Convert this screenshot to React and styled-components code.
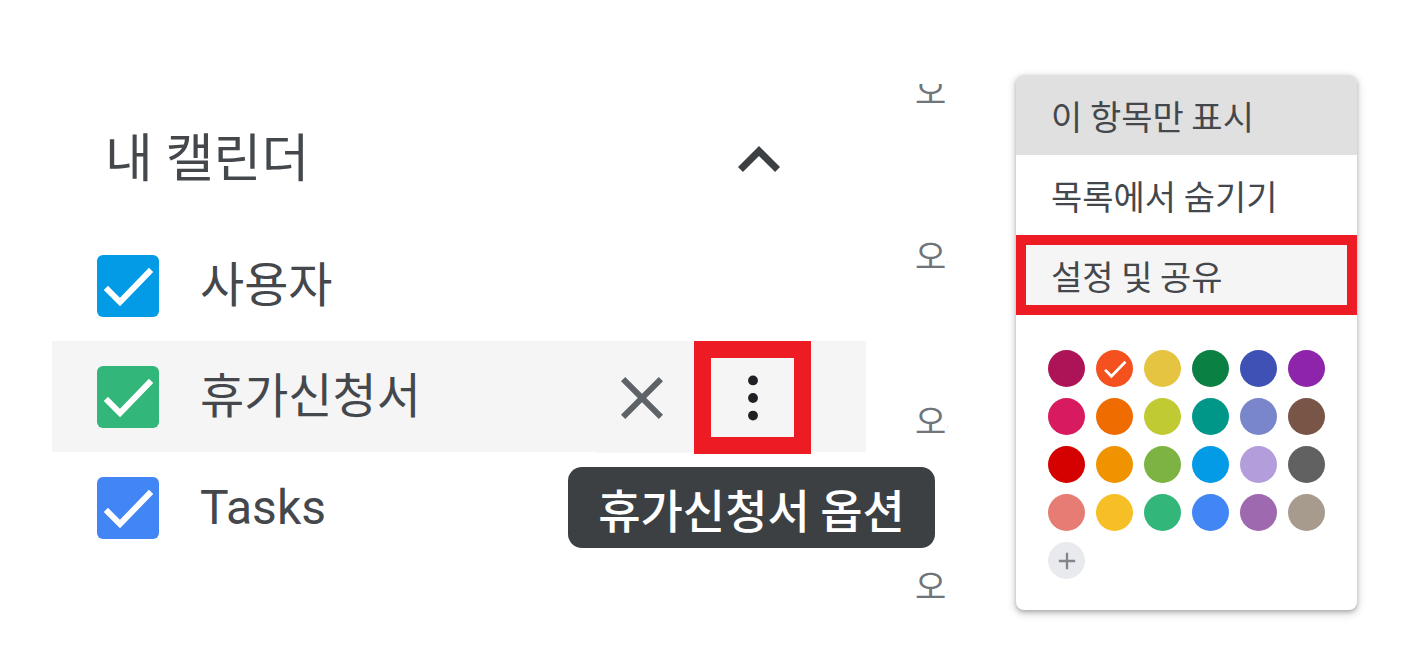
import React from 'react';
import styled, { createGlobalStyle } from 'styled-components';

const GlobalStyle = createGlobalStyle`
  html, body {
    margin: 0;
    padding: 0;
    background: #ffffff;
  }
  body {
    font-family: Roboto, 'Noto Sans CJK KR', sans-serif;
    color: #3c4043;
  }
`;

const Page = styled.div`
  position: relative;
  width: 1413px;
  height: 660px;
  display: flex;
  overflow: hidden;
`;

const Sidebar = styled.div`
  width: 814px;
  padding: 105px 0 0 52px;
  display: flex;
  flex-direction: column;
`;

const SectionHeader = styled.div`
  height: 110px;
  margin-bottom: 15px;
  padding: 0 65px 0 53px;
  display: flex;
  align-items: center;
  justify-content: space-between;

  h2 {
    margin: 0;
    font-family: Roboto, 'Noto Sans CJK KR', sans-serif;
    font-size: 52px;
    font-weight: 400;
    color: #44484c;
    line-height: 1;
  }
`;

const CalendarRow = styled.div`
  height: 111px;
  padding-left: 45px;
  display: flex;
  align-items: center;
  background: ${(p) => (p.$hover ? '#f5f5f5' : 'transparent')};
`;

const Checkbox = styled.div`
  width: 62px;
  height: 62px;
  border-radius: 6px;
  background: ${(p) => p.$color};
  flex-shrink: 0;

  svg {
    display: block;
  }
`;

const Label = styled.span`
  margin-left: 41px;
  font-size: 48px;
  line-height: 1;
  color: #44484c;
  white-space: nowrap;
`;

const Actions = styled.div`
  margin-left: auto;
  margin-right: 55px;
  display: flex;
  align-items: center;
  gap: 7px;
  align-self: flex-start;
`;

const IconButton = styled.div`
  width: ${(p) => (p.$marked ? '83px' : '90px')};
  height: ${(p) => (p.$marked ? '79px' : '111px')};
  display: flex;
  align-items: center;
  justify-content: center;
  border: ${(p) => (p.$marked ? '17px solid #ed1c24' : 'none')};
  background: #f5f5f5;
`;

const TimeColumn = styled.div`
  margin: 84px 0 0 49px;
  width: 33px;
  height: 516px;
  overflow: hidden;
`;

const TimeList = styled.div`
  margin-top: -77px;
  display: flex;
  flex-direction: column;
`;

const TimeLabel = styled.div`
  height: 165px;
  line-height: 165px;
  font-family: 'Noto Sans CJK KR', sans-serif;
  font-size: 34px;
  color: #70757a;
  white-space: nowrap;
`;

const Tooltip = styled.div`
  position: absolute;
  left: 568px;
  top: 467px;
  width: 367px;
  height: 81px;
  border-radius: 14px;
  background: #3c4043;
  color: #ffffff;
  display: flex;
  align-items: center;
  justify-content: center;
  font-family: 'Noto Sans CJK KR', sans-serif;
  font-size: 46px;
  font-weight: 500;
  white-space: nowrap;
`;

const Menu = styled.div`
  position: absolute;
  left: 1016px;
  top: 75px;
  width: 341px;
  height: 535px;
  border-radius: 8px;
  background: #ffffff;
  box-shadow: 0 2px 4px rgba(0, 0, 0, 0.25), 0 3px 8px 2px rgba(0, 0, 0, 0.12);
  overflow: hidden;
  display: flex;
  flex-direction: column;
`;

const MenuItem = styled.div`
  height: 80px;
  padding-left: 35px;
  display: flex;
  align-items: center;
  font-family: 'Noto Sans CJK KR', sans-serif;
  font-size: 34px;
  color: #44484c;
  background: ${(p) => (p.$active ? '#e0e0e0' : p.$marked ? '#f5f5f5' : '#ffffff')};
  box-shadow: ${(p) => (p.$marked ? 'inset 0 0 0 10px #ed1c24' : 'none')};
  white-space: nowrap;
`;

const Swatches = styled.div`
  padding: 35px 0 0 32px;
  display: grid;
  grid-template-columns: repeat(6, 37px);
  grid-auto-rows: 37px;
  gap: 11px;
`;

const Swatch = styled.div`
  width: 37px;
  height: 37px;
  border-radius: 50%;
  background: ${(p) => p.$color};
  display: flex;
  align-items: center;
  justify-content: center;
`;

const Check = ({ size = 62 }) => (
  <svg width={size} height={size} viewBox="0 0 62 62">
    <polyline points="11,35 23,47 52,17" fill="none" stroke="#ffffff" strokeWidth="6" strokeLinecap="square" />
  </svg>
);

const palette = [
  '#ad1457', '#f4511e', '#e4c441', '#0b8043', '#3f51b5', '#8e24aa',
  '#d81b60', '#ef6c00', '#c0ca33', '#009688', '#7986cb', '#795548',
  '#d50000', '#f09300', '#7cb342', '#039be5', '#b39ddb', '#616161',
  '#e67c73', '#f6bf26', '#33b679', '#4285f4', '#9e69af', '#a79b8e',
];

const calendars = [
  { name: '사용자', color: '#039be5' },
  { name: '휴가신청서', color: '#33b679', hover: true },
  { name: 'Tasks', color: '#4285f4' },
];

const times = ['오전 11시', '오후 12시', '오후 1시', '오후 2시'];

export default function App() {
  return (
    <Page>
      <GlobalStyle />
      <Sidebar>
        <SectionHeader>
          <h2>내 캘린더</h2>
          <svg width="84" height="84" viewBox="0 0 24 24" fill="#3c4043">
            <path d="M7.41 15.41L12 10.83l4.59 4.58L18 14l-6-6-6 6z" />
          </svg>
        </SectionHeader>
        {calendars.map((cal) => (
          <CalendarRow key={cal.name} $hover={cal.hover}>
            <Checkbox $color={cal.color}>
              <Check />
            </Checkbox>
            <Label>{cal.name}</Label>
            {cal.hover && (
              <Actions>
                <IconButton>
                  <svg width="72" height="72" viewBox="0 0 24 24" fill="#5f6368">
                    <path d="M19 6.41L17.59 5 12 10.59 6.41 5 5 6.41 10.59 12 5 17.59 6.41 19 12 13.41 17.59 19 19 17.59 13.41 12z" />
                  </svg>
                </IconButton>
                <IconButton $marked>
                  <svg width="62" height="62" viewBox="0 0 24 24" fill="#202124">
                    <circle cx="12" cy="5.2" r="1.9" />
                    <circle cx="12" cy="12" r="1.9" />
                    <circle cx="12" cy="18.8" r="1.9" />
                  </svg>
                </IconButton>
              </Actions>
            )}
          </CalendarRow>
        ))}
      </Sidebar>

      <TimeColumn>
        <TimeList>
          {times.map((t) => (
            <TimeLabel key={t}>{t}</TimeLabel>
          ))}
        </TimeList>
      </TimeColumn>

      <Tooltip>휴가신청서 옵션</Tooltip>

      <Menu>
        <MenuItem $active>이 항목만 표시</MenuItem>
        <MenuItem>목록에서 숨기기</MenuItem>
        <MenuItem $marked>설정 및 공유</MenuItem>
        <Swatches>
          {palette.map((c, i) => (
            <Swatch key={c} $color={c}>
              {i === 1 && <Check size={28} />}
            </Swatch>
          ))}
          <Swatch $color="#e8eaed">
            <svg width="28" height="28" viewBox="0 0 24 24" fill="#80868b">
              <path d="M19 13h-6v6h-2v-6H5v-2h6V5h2v6h6v2z" />
            </svg>
          </Swatch>
        </Swatches>
      </Menu>
    </Page>
  );
}
